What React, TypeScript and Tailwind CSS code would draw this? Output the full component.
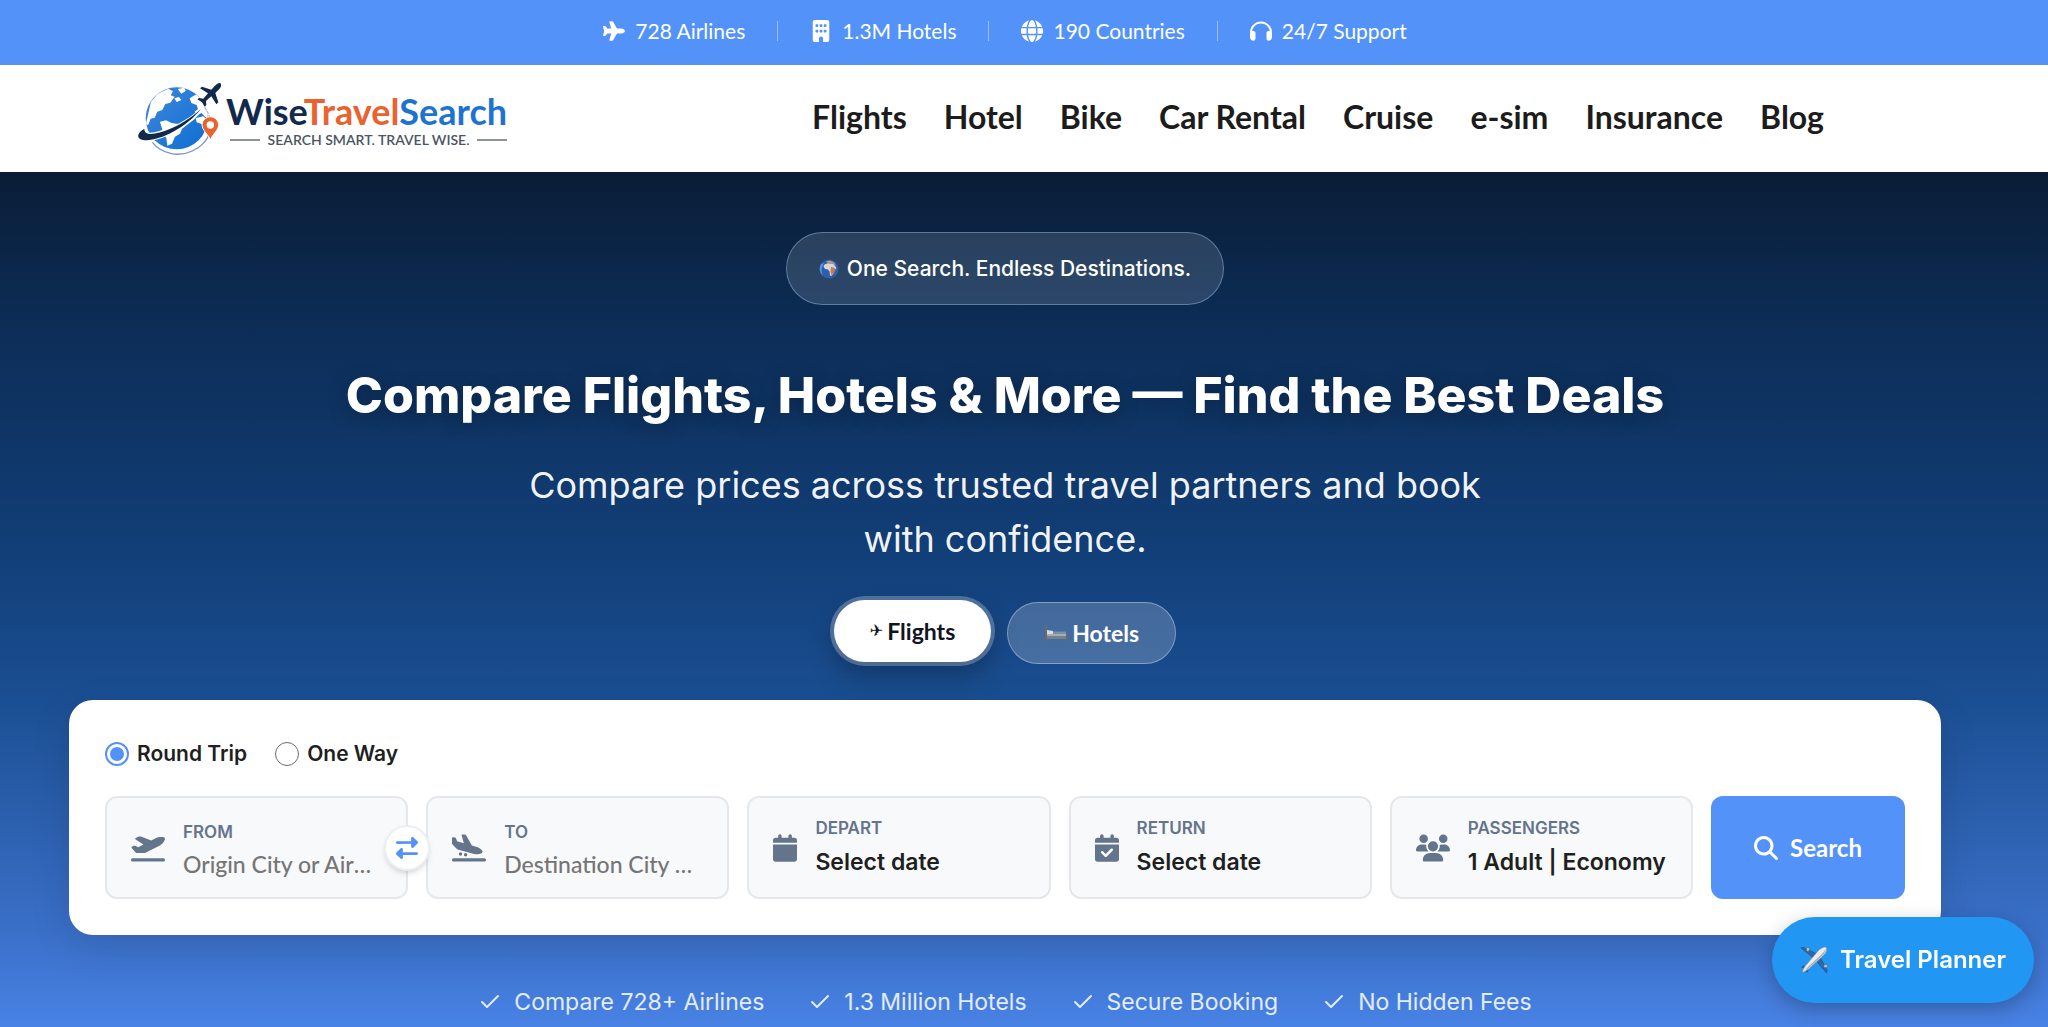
import { clsx } from "clsx";
import { Check } from "lucide-react";
import { useState } from "react";
import type { ReactNode } from "react";
import {
  FaBuilding,
  FaCalendar,
  FaCalendarCheck,
  FaGlobe,
  FaHeadphones,
  FaMagnifyingGlass,
  FaPlane,
  FaPlaneArrival,
  FaPlaneDeparture,
  FaRightLeft,
  FaUsers,
} from "react-icons/fa6";

const STATS = [
  { icon: FaPlane, label: "728 Airlines" },
  { icon: FaBuilding, label: "1.3M Hotels" },
  { icon: FaGlobe, label: "190 Countries" },
  { icon: FaHeadphones, label: "24/7 Support" },
];

const NAV = [
  "Flights",
  "Hotel",
  "Bike",
  "Car Rental",
  "Cruise",
  "e-sim",
  "Insurance",
  "Blog",
];

const TRUST = [
  "Compare 728+ Airlines",
  "1.3 Million Hotels",
  "Secure Booking",
  "No Hidden Fees",
];

const FIELD =
  "relative flex h-[103px] min-w-0 flex-1 items-center gap-[18px] rounded-xl border-2 border-[#e5e8eb] bg-[#f8f9fa] px-6 text-left";
const FIELD_LABEL = "block text-[17px] leading-6 font-semibold text-[#64748b]";
const FIELD_VALUE = "block text-[23px] leading-8 font-semibold text-[#1f1f1f]";

function LogoMark() {
  return (
    <svg viewBox="0 0 270 240" className="h-20 w-[90px]" aria-hidden="true">
      <defs>
        <linearGradient id="ocean" x1="0" y1="0" x2="1" y2="1">
          <stop offset="0" stopColor="#3f86dc" />
          <stop offset="1" stopColor="#0d6fd2" />
        </linearGradient>
        <clipPath id="ball">
          <circle cx="125" cy="118" r="93" />
        </clipPath>
      </defs>
      <path
        d="M52 190c28 34 78 46 120 26 24-11 42-30 52-52"
        fill="none"
        stroke="#7d93c8"
        strokeWidth="4"
      />
      <circle cx="125" cy="118" r="93" fill="url(#ocean)" />
      <g fill="#fff" clipPath="url(#ball)">
        <path d="M48 68l20-24 32-15 14 8-7 12 12 4-13 18-15 4-9 18-15 5-8 18-12 3-7 18-8 0z" />
        <path d="M128 30l20-4 4 10-13 8zM118 58l14-4 7 9-14 6z" />
        <path d="M164 58l20-12 34 30 10 36-18 2-10-12-15 6-6-10 10-8-4-12-16-6z" />
        <path d="M75 128l18-4 17 8 20 3 13 10-8 19-15 9-9 21-14 6-3-22-10-18z" />
        <path d="M182 118l22-6 18 14-4 28-9-2-8-16-16-6z" />
      </g>
      <path
        d="M17 164c3 22 30 20 62 9 50-17 86-42 118-78-44 37-87 57-128 67-26 6-40 6-41-6z"
        fill="none"
        stroke="#fff"
        strokeWidth="9"
      />
      <path
        d="M28 150c-20 8-27 30-3 33 22 4 58-8 88-24 36-19 64-43 85-69-30 27-60 46-94 60-35 14-76 25-76 0z"
        fill="#12294b"
      />
      <path
        d="M209 86c10 12 15 24 17 38"
        fill="none"
        stroke="#8b98ad"
        strokeWidth="3"
        strokeDasharray="8 5"
      />
      <path
        d="M256 12c-7-1-12 4-17 9l-10 11-28-9-6 5 24 15-14 16-13-2-5 4 14 9 8 13 5-5-1-12 16-14 15 24 6-6-9-28 11-11c5-5 9-11 4-19z"
        fill="#12294b"
      />
      <path
        d="M226 182c-6-15-25-29-25-44a25 25 0 0 1 50 0c0 15-19 29-25 44z"
        fill="#ea6230"
        stroke="#fff"
        strokeWidth="3"
      />
      <circle cx="226" cy="138" r="11" fill="#fff" />
    </svg>
  );
}

function EarthIcon() {
  return (
    <svg viewBox="0 0 20 20" className="size-5" aria-hidden="true">
      <circle cx="10" cy="10" r="9.5" fill="#2c5fae" />
      <path d="M2 5a9.500 9.500 0 0 0 2 12C2 13 2 9 5 4z" fill="#5b94e0" />
      <path
        d="M5.500 5.500l4-1.500 5 1 3 4-1.500 1.500-1.500 4-2 2.500-1.500-.5-.5-4-1.500-2-3-.5-1.500-2.500z"
        fill="#d9d6d8"
      />
      <path d="M12 8l3 .5 1.500 2-2 4-2 2-1-4z" fill="#c8795a" />
      <path d="M7 2.500l4-1 4 2 2 3-4-2-3 .5z" fill="#b99a7c" />
    </svg>
  );
}

function BedIcon() {
  return (
    <svg viewBox="0 0 24 18" className="h-[18px] w-6" aria-hidden="true">
      <path d="M1 1h2v16H1zM22 9h1.500v8H22z" fill="#6e6a68" />
      <path d="M3 11h19v4H3z" fill="#7b7f86" />
      <path d="M3 8h19v4H3z" fill="#a3aebd" />
      <path d="M3 6l6 1v3H3z" fill="#d5dee8" />
      <path d="M9 7.500h13V10H9z" fill="#7f8fa6" />
    </svg>
  );
}

function JetIcon() {
  return (
    <svg viewBox="0 0 30 30" className="size-7" aria-hidden="true">
      <g fill="#2f68a8" stroke="#27456b" strokeWidth=".6">
        <path d="M1 2l3-.5L19 9l-4 4.500z" />
        <path d="M28.500 29l.5-3L21 11l-4.500 4z" />
        <path d="M2 23l1-1.500 6 .5-1 2z" />
        <path d="M7 28l1.500-1L8 21l-2 1z" />
      </g>
      <path
        d="M28 1.500c1.500 1.500.5 5-2 8L10 24c-3 2.500-6 4-7 4s.5-4 3-7L20 4.500C23 2 26.500 0 28 1.500z"
        fill="#e9ebee"
        stroke="#7b828c"
        strokeWidth=".7"
      />
      <path d="M28 3c0 2-1 4-3 6.500L9 24l-5 3.500 5-5.500L24 8z" fill="#aab0b8" />
      <g fill="#b9c3cf" stroke="#4b5b70" strokeWidth=".5">
        <rect x="7" y="1.500" width="3" height="4" rx="1" />
        <rect x="25.500" y="20" width="4" height="3" rx="1" />
      </g>
    </svg>
  );
}

function TopBar() {
  return (
    <div className="bg-[#5392f9] pr-[38px] font-[Lato,sans-serif] text-[21px] text-white">
      <ul className="flex h-[65px] items-center justify-center pb-1">
        {STATS.map(({ icon: Icon, label }, i) => (
          <li key={label} className="flex items-center">
            {i > 0 && <span className="mx-8 h-5 w-px bg-white/40" />}
            <Icon className="mr-2.5 size-[22px]" />
            {label}
          </li>
        ))}
      </ul>
    </div>
  );
}

function Header() {
  return (
    <header className="flex h-[107px] items-center justify-between bg-white pr-56 pl-[135px] font-[Lato,sans-serif]">
      <a href="#" className="flex items-center gap-px" aria-label="WiseTravelSearch">
        <LogoMark />
        <span className="flex flex-col">
          <span className="text-[36px] leading-[42px] font-bold text-[#12294b]">
            Wise<span className="text-[#ea6230]">Travel</span>
            <span className="text-[#1f73d0]">Search</span>
          </span>
          <span className="flex items-center gap-2 pl-1 text-[14px] leading-4 font-semibold text-[#4b5563]">
            <span className="h-0.5 flex-1 bg-[#8f9499]" />
            SEARCH SMART. TRAVEL WISE.
            <span className="h-0.5 flex-1 bg-[#8f9499]" />
          </span>
        </span>
      </a>
      <nav className="flex gap-[37px] pb-1 text-[32px] font-bold text-[#1c1c1c]">
        {NAV.map((item) => (
          <a key={item} href="#">
            {item}
          </a>
        ))}
      </nav>
    </header>
  );
}

function PickerField({
  icon,
  label,
  value,
}: {
  icon: ReactNode;
  label: string;
  value: string;
}) {
  return (
    <button type="button" className={FIELD}>
      {icon}
      <span className="flex flex-col gap-1.5 pb-0.5 whitespace-nowrap">
        <span className={FIELD_LABEL}>{label}</span>
        <span className={FIELD_VALUE}>{value}</span>
      </span>
    </button>
  );
}

function PlaceField({
  id,
  icon,
  label,
  placeholder,
  value,
  onChange,
  children,
}: {
  id: string;
  icon: ReactNode;
  label: string;
  placeholder: string;
  value: string;
  onChange: (value: string) => void;
  children?: ReactNode;
}) {
  return (
    <div className={FIELD}>
      {icon}
      <div className="flex min-w-0 flex-1 flex-col gap-1 pt-1">
        <label htmlFor={id} className={FIELD_LABEL}>
          {label}
        </label>
        <input
          id={id}
          type="text"
          value={value}
          onChange={(e) => onChange(e.target.value)}
          placeholder={placeholder}
          className="w-full truncate bg-transparent font-[Lato,sans-serif] text-[23px] leading-8 font-medium outline-none placeholder:text-[#757575]"
        />
      </div>
      {children}
    </div>
  );
}

function SearchCard() {
  const [trip, setTrip] = useState("Round Trip");
  const [from, setFrom] = useState("");
  const [to, setTo] = useState("");

  const swap = () => {
    setFrom(to);
    setTo(from);
  };

  return (
    <form
      className="mx-[69px] mt-9 self-stretch rounded-3xl bg-white p-9 shadow-[0_12px_40px_rgba(0,0,0,0.12)]"
      onSubmit={(e) => e.preventDefault()}
    >
      <div className="mb-6 flex h-9 items-center gap-7">
        {["Round Trip", "One Way"].map((option) => (
          <label
            key={option}
            className="flex items-center gap-2 text-[21px] font-semibold text-[#1f1f1f]"
          >
            <input
              type="radio"
              name="trip"
              checked={trip === option}
              onChange={() => setTrip(option)}
              className="size-6 appearance-none rounded-full border border-[#6b6b6b] bg-white checked:border-2 checked:border-[#5392f9] checked:bg-[#5392f9] checked:bg-clip-content checked:p-[3px]"
            />
            {option}
          </label>
        ))}
      </div>
      <div className="flex gap-[18px]">
        <PlaceField
          id="from"
          label="FROM"
          placeholder="Origin City or Airport"
          value={from}
          onChange={setFrom}
          icon={<FaPlaneDeparture className="h-7 w-[34px] shrink-0 text-[#64748b]" />}
        >
          <button
            type="button"
            aria-label="Swap"
            onClick={swap}
            className="absolute -right-6 z-10 flex size-[46px] items-center justify-center rounded-full border-2 border-[#eceff2] bg-white text-[#5392f9] shadow-md"
          >
            <FaRightLeft className="size-[22px]" />
          </button>
        </PlaceField>
        <PlaceField
          id="to"
          label="TO"
          placeholder="Destination City or Airport"
          value={to}
          onChange={setTo}
          icon={<FaPlaneArrival className="h-7 w-[34px] shrink-0 text-[#64748b]" />}
        />
        <PickerField
          label="DEPART"
          value="Select date"
          icon={<FaCalendar className="h-7 w-6 shrink-0 text-[#64748b]" />}
        />
        <PickerField
          label="RETURN"
          value="Select date"
          icon={<FaCalendarCheck className="h-7 w-6 shrink-0 text-[#64748b]" />}
        />
        <PickerField
          label="PASSENGERS"
          value="1 Adult | Economy"
          icon={<FaUsers className="h-7 w-[34px] shrink-0 text-[#64748b]" />}
        />
        <button
          type="submit"
          className="flex w-[194px] items-center justify-center gap-3 rounded-xl bg-[#5392f9] font-[Lato,sans-serif] text-2xl font-bold text-white"
        >
          <FaMagnifyingGlass className="size-6" />
          Search
        </button>
      </div>
    </form>
  );
}

function Hero() {
  const [tab, setTab] = useState("Flights");

  return (
    <main className="flex flex-1 flex-col items-center bg-[linear-gradient(180deg,#0a1d36_0%,#0c2c55_17%,#12407a_46%,#1b4f93_62%,#3b70c9_89%,#4882e4_100%)] pt-[60px] pr-[38px] font-[Inter,sans-serif] text-white">
      <p className="flex h-[73px] items-center gap-2 rounded-full border border-[#93b4dc]/50 bg-[#e0ecf8]/15 px-8 text-[21px] font-medium">
        <EarthIcon />
        One Search. Endless Destinations.
      </p>
      <h1 className="mt-[60px] text-center text-[50px] leading-[60px] font-extrabold [text-shadow:0_4px_20px_rgba(0,0,0,0.3)]">
        Compare Flights, Hotels &amp; More — Find the Best Deals
      </h1>
      <p className="mt-[33px] max-w-[1000px] text-center text-[36px] leading-[54px] text-white/95">
        Compare prices across trusted travel partners and book with confidence.
      </p>
      <div className="mt-9 flex gap-4 font-[Lato,sans-serif] text-[23px] font-bold">
        {["Flights", "Hotels"].map((name) => (
          <button
            key={name}
            type="button"
            onClick={() => setTab(name)}
            className={clsx(
              "flex h-[62px] items-center gap-1 rounded-full px-9",
              tab === name
                ? "-translate-y-0.5 bg-white text-[#10151f] shadow-[0_0_0_4px_rgba(255,255,255,0.25),0_12px_28px_rgba(0,0,0,0.3)]"
                : "border border-white/35 bg-white/20"
            )}
          >
            {name === "Flights" ? (
              <span className="font-['DejaVu_Sans',sans-serif] text-base font-normal">
                ✈
              </span>
            ) : (
              <BedIcon />
            )}
            {name}
          </button>
        ))}
      </div>
      <SearchCard />
      <ul className="mt-[51px] flex gap-11 text-[23px] leading-8 text-white/85">
        {TRUST.map((item) => (
          <li key={item} className="flex items-center gap-3">
            <Check className="size-6" strokeWidth={2} />
            {item}
          </li>
        ))}
      </ul>
    </main>
  );
}

export default function App() {
  return (
    <div className="flex min-h-screen flex-col">
      <TopBar />
      <Header />
      <Hero />
      <button
        type="button"
        className="fixed right-[14px] bottom-6 z-20 flex h-[86px] items-center gap-3 rounded-full bg-[#2196f3] px-7 font-[Inter,sans-serif] text-2xl font-semibold text-white shadow-[0_6px_20px_rgba(0,0,0,0.25)]"
      >
        <JetIcon />
        Travel Planner
      </button>
    </div>
  );
}
